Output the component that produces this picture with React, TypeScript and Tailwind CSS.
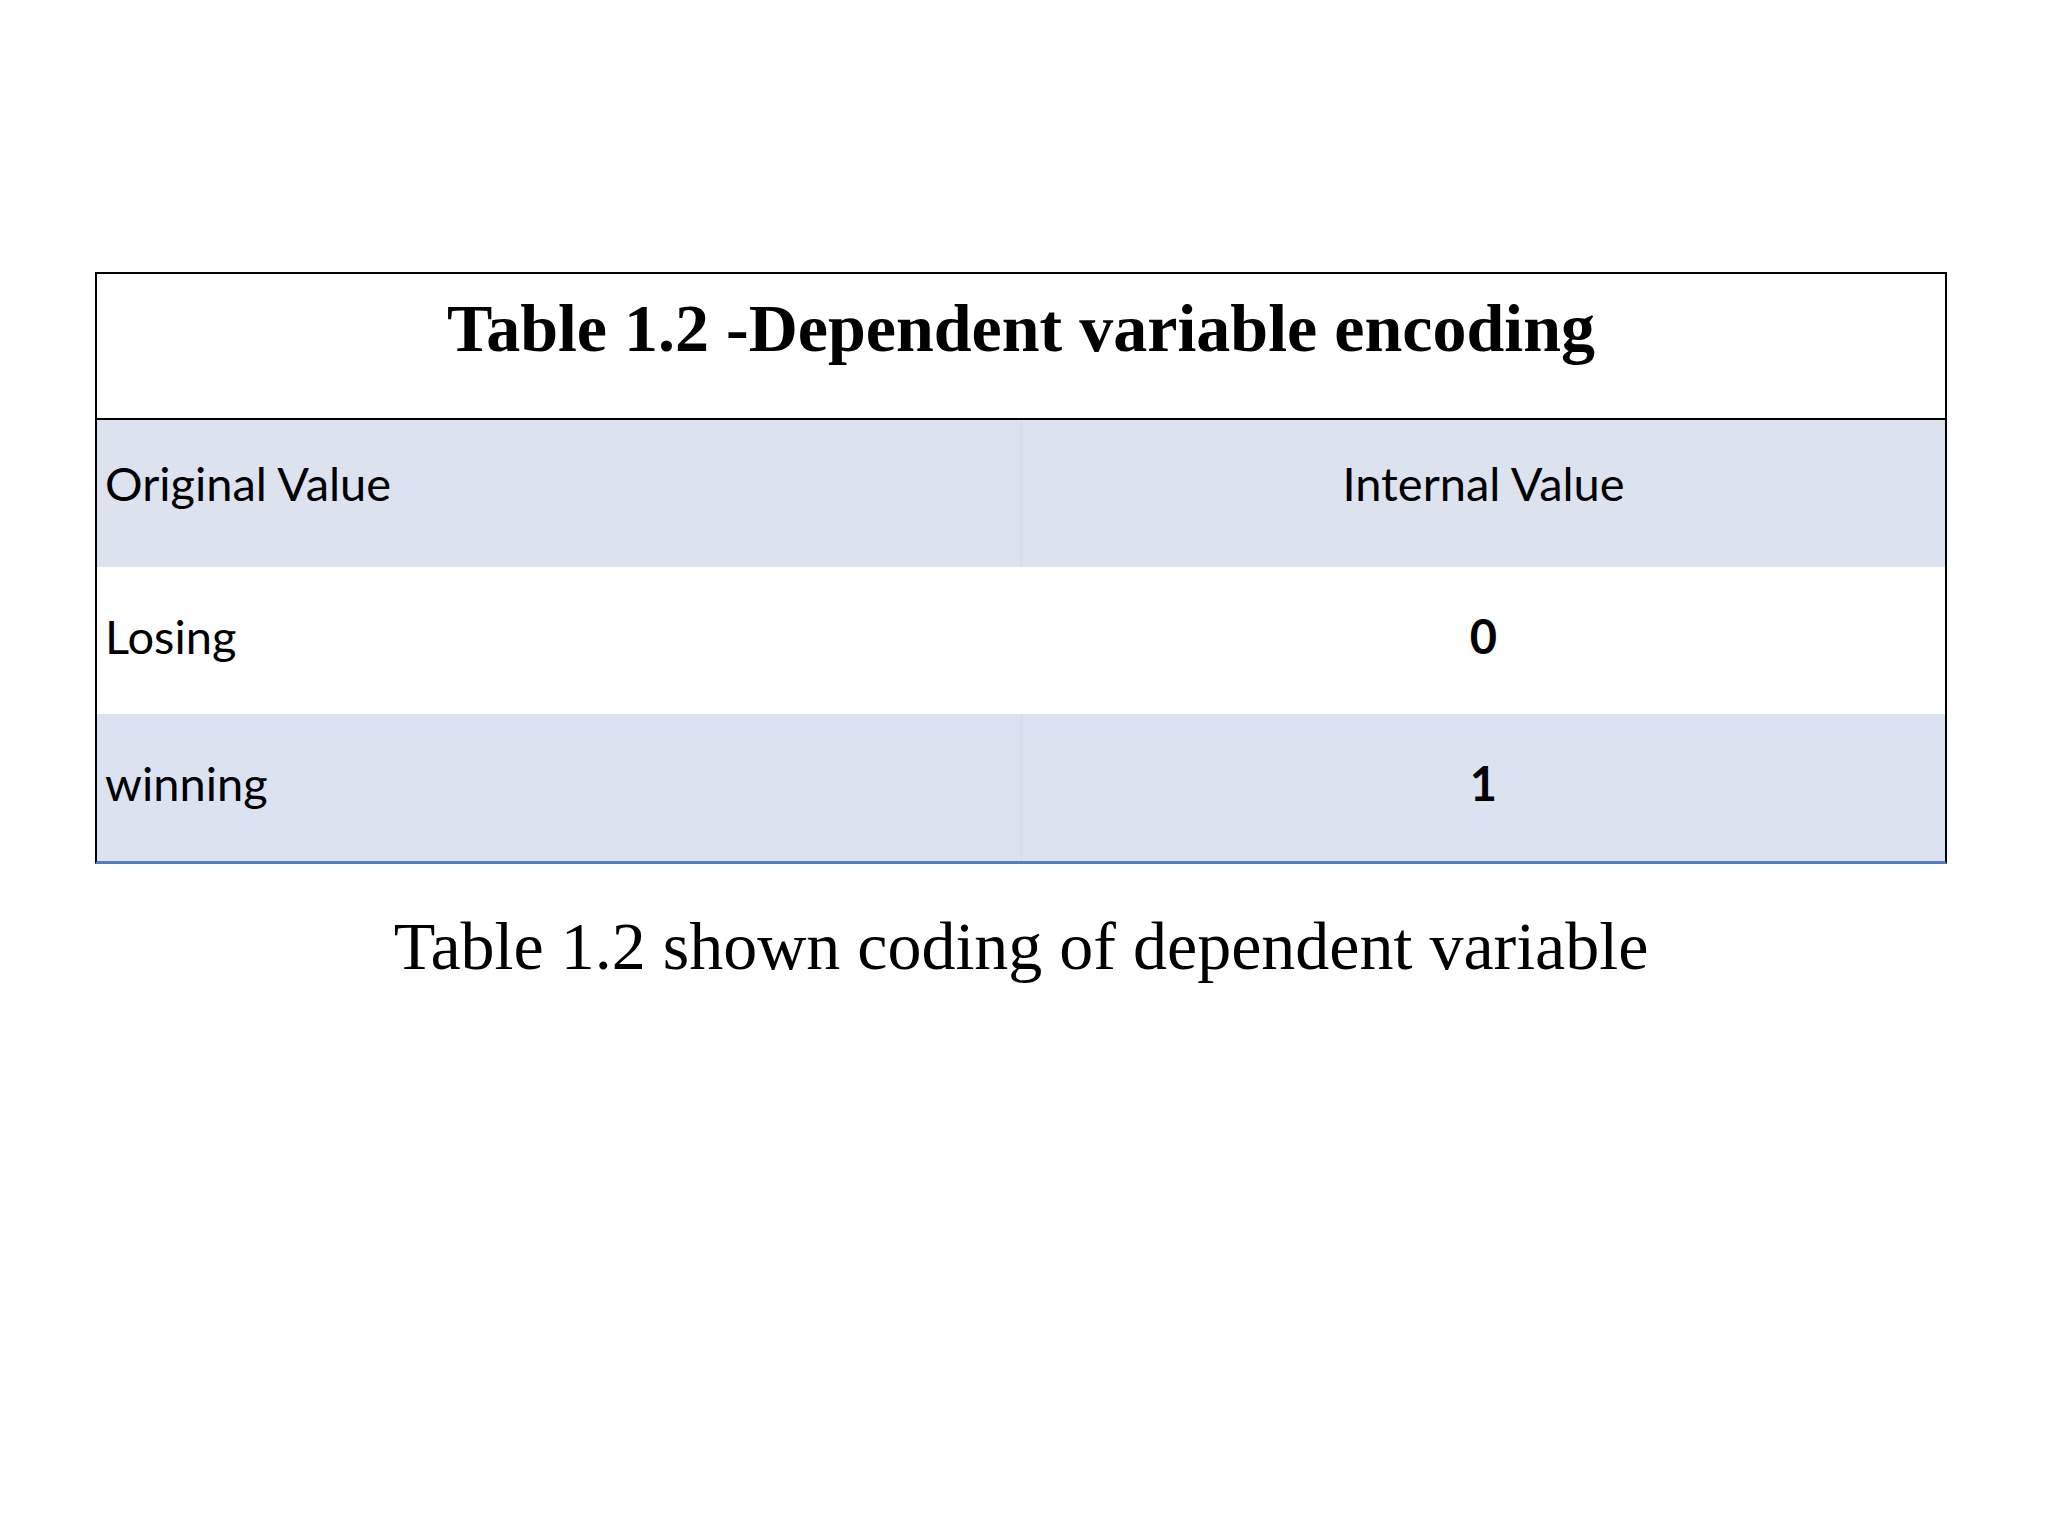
import React from "react";

const rows = [
  { label: "Losing", value: "0", shaded: false },
  { label: "winning", value: "1", shaded: true },
];

export default function App() {
  return (
    <div className="w-[2048px] h-[1536px] bg-white flex flex-col items-start pt-[272px] pl-[95px]">
      <div className="w-[1852px] border-x-2 border-t-2 border-black border-b-[3px] border-b-[#4f7fbf]">
        <div className="h-[146px] border-b-2 border-black flex justify-center pt-[20px]">
          <h1 className="font-['Liberation_Serif',serif] font-bold text-[68px] leading-none text-black">
            Table 1.2 -Dependent variable encoding
          </h1>
        </div>

        <div className="h-[147px] bg-[#dce3ef] flex font-['Lato',sans-serif] text-[47px] text-black">
          <div className="w-[925px] border-r border-[#d3dbe8] flex items-center pl-[8px] pb-[20px]">
            Original Value
          </div>
          <div className="flex-1 flex items-center justify-center pb-[20px]">Internal Value</div>
        </div>

        {rows.map((r) => (
          <div
            key={r.label}
            className={`h-[147px] flex font-['Lato',sans-serif] text-[47px] text-black ${
              r.shaded ? "bg-[#dbe3f0]" : "bg-white"
            }`}
          >
            <div
              className={`w-[925px] flex items-center pl-[8px] pb-[8px] ${
                r.shaded ? "border-r border-[#d3dbe8]" : ""
              }`}
            >
              {r.label}
            </div>
            <div className="flex-1 flex items-center justify-center font-bold pb-[8px]">{r.value}</div>
          </div>
        ))}
      </div>

      <p className="w-[1852px] mt-[48px] text-center font-['Liberation_Serif',serif] text-[68px] leading-none text-black">
        Table 1.2 shown coding of dependent variable
      </p>
    </div>
  );
}
